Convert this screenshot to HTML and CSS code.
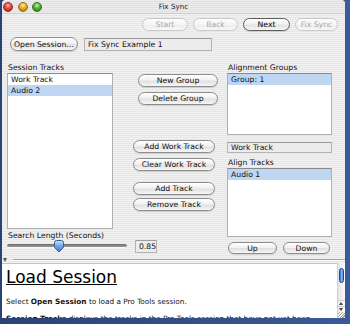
FILE: index.html
```html
<!DOCTYPE html>
<html lang="en">
<head>
    <meta charset="UTF-8">
    <meta name="viewport" content="width=device-width, initial-scale=1.0">
    <title>Fix Sync</title>
    <link rel="stylesheet" href="styles.css">
</head>
<body>
    <div class="window">
        <div class="titlebar">
            <div class="lights">
                <span class="light red"></span>
                <span class="light yellow"></span>
                <span class="light green"></span>
            </div>
            <div class="title">Fix Sync</div>
            <div></div>
        </div>

        <div class="toolbar">
            <button class="btn btn-start" disabled>Start</button>
            <button class="btn btn-back" disabled>Back</button>
            <button class="btn btn-next">Next</button>
            <button class="btn btn-fix" disabled>Fix Sync</button>
        </div>

        <div class="session-row">
            <button class="btn btn-open">Open Session…</button>
            <div class="field session-field">Fix Sync Example 1</div>
        </div>

        <div class="main">
            <div class="col col-left">
                <div class="label">Session Tracks</div>
                <div class="list session-list">
                    <div class="row">Work Track</div>
                    <div class="row selected">Audio 2</div>
                </div>
                <div class="label slider-label">Search Length (Seconds)</div>
                <div class="slider-row">
                    <div class="slider">
                        <div class="groove"></div>
                        <svg class="thumb" width="12" height="13" viewBox="0 0 12 13">
                            <defs>
                                <linearGradient id="thumbFill" x1="0" y1="0" x2="0" y2="1">
                                    <stop offset="0" stop-color="#cfe3fb"/>
                                    <stop offset="0.5" stop-color="#6fa3e6"/>
                                    <stop offset="1" stop-color="#3a76d0"/>
                                </linearGradient>
                            </defs>
                            <path d="M1.5 2.5 Q1.5 0.5 3.5 0.5 H8.5 Q10.5 0.5 10.5 2.5 V7.5 L6 12 L1.5 7.5 Z" fill="url(#thumbFill)" stroke="#3b5f97" stroke-width="1"/>
                        </svg>
                    </div>
                    <div class="field value-field">0.85</div>
                </div>
            </div>

            <div class="col col-middle">
                <button class="btn btn-group btn-new">New Group</button>
                <button class="btn btn-group btn-delete">Delete Group</button>
                <button class="btn btn-track btn-addwork">Add Work Track</button>
                <button class="btn btn-track btn-clear">Clear Work Track</button>
                <button class="btn btn-track btn-add">Add Track</button>
                <button class="btn btn-track btn-remove">Remove Track</button>
            </div>

            <div class="col col-right">
                <div class="label">Alignment Groups</div>
                <div class="list groups-list">
                    <div class="row selected">Group: 1</div>
                </div>
                <div class="field work-field">Work Track</div>
                <div class="label align-label">Align Tracks</div>
                <div class="list align-list">
                    <div class="row selected">Audio 1</div>
                </div>
                <div class="updown">
                    <button class="btn btn-up">Up</button>
                    <button class="btn btn-down">Down</button>
                </div>
            </div>
        </div>

        <div class="splitter">
            <span class="tri"></span>
            <div class="split-line"></div>
        </div>

        <div class="help-area">
            <div class="help">
                <h1>Load Session</h1>
                <p>Select <b>Open Session</b> to load a Pro Tools session.</p>
                <p class="clipped"><b>Session Tracks</b> displays the tracks in the Pro Tools session that have not yet been</p>
            </div>
            <div class="scrollbar">
                <div class="track">
                    <div class="sb-thumb"></div>
                </div>
                <div class="arrow arrow-up"></div>
                <div class="arrow arrow-down"></div>
                <div class="grip"></div>
            </div>
        </div>
    </div>
</body>
</html>
```

FILE: styles.css
```css
body {
    margin: 0;
    width: 350px;
    height: 324px;
    overflow: hidden;
    background: linear-gradient(90deg, #2b4275, #3b5a98);
    font-family: "DejaVu Sans", sans-serif;
}
.window {
    margin-left: 2px;
    width: 343px;
    height: 318px;
    display: flex;
    flex-direction: column;
    background: repeating-linear-gradient(#f1f1f1 0 1px, #e7e7e7 1px 2px);
    border-radius: 4px 4px 0 0;
    overflow: hidden;
}

/* title bar */
.titlebar {
    height: 14px;
    flex: none;
    display: grid;
    grid-template-columns: 1fr auto 1fr;
    align-items: center;
    background: repeating-linear-gradient(#ececec 0 1px, #e1e1e1 1px 2px);
    border-bottom: 1px solid #cdcdcd;
    box-sizing: border-box;
}
.lights {
    display: flex;
    gap: 4.5px;
    padding-left: 1px;
}
.light {
    width: 10px;
    height: 10px;
    border-radius: 50%;
    box-sizing: border-box;
}
.red {
    background: radial-gradient(circle at 50% 30%, #ffb0a8 0, #e2463c 45%, #a51d14 100%);
    border: 1px solid #8e2a22;
}
.yellow {
    background: radial-gradient(circle at 50% 30%, #ffe9a0 0, #e4a923 45%, #a46d0c 100%);
    border: 1px solid #97690e;
}
.green {
    background: radial-gradient(circle at 50% 30%, #c4f0a8 0, #4fb134 45%, #2a7318 100%);
    border: 1px solid #2e6c1f;
}
.title {
    font-size: 7.2px;
    color: #1a1a1a;
}

/* buttons */
.btn {
    height: 13px;
    padding: 0;
    box-sizing: border-box;
    border: 1px solid #8d8d8d;
    border-radius: 7px;
    background: linear-gradient(#fefefe, #f2f2f2 45%, #e1e1e1 55%, #f6f6f6);
    box-shadow: 0 1px 1px rgba(0, 0, 0, 0.12);
    font-family: "DejaVu Sans", sans-serif;
    font-size: 7.7px;
    color: #111;
    display: flex;
    align-items: center;
    justify-content: center;
}
.btn:disabled {
    color: #a9a9a9;
    border-color: #c9c9c9;
    background: linear-gradient(#fdfdfd, #f5f5f5 50%, #ededed 55%, #f8f8f8);
    box-shadow: none;
}
.btn-next {
    border-color: #5e5e5e;
    color: #000;
}

.toolbar {
    display: flex;
    justify-content: flex-end;
    gap: 5px;
    padding: 4px 7px 0 0;
}
.btn-start { width: 46px; }
.btn-back { width: 45px; }
.btn-next { width: 47px; }
.btn-fix { width: 43px; }

.session-row {
    display: flex;
    align-items: center;
    gap: 6px;
    padding-left: 8px;
    margin-top: 6px;
}
.btn-open {
    width: 68px;
    height: 14px;
}

/* fields */
.field {
    box-sizing: border-box;
    background: #ececec;
    border: 1px solid #b4b4b4;
    border-top-color: #9c9c9c;
    font-size: 7.7px;
    color: #111;
    display: flex;
    align-items: center;
    padding-left: 3px;
}
.session-field {
    width: 128px;
    height: 13px;
}

/* main area */
.main {
    display: grid;
    grid-template-columns: 106px 114px 105px;
    padding-left: 5px;
    margin-top: 12px;
}
.col {
    display: flex;
    flex-direction: column;
}
.label {
    font-size: 7.7px;
    line-height: 10px;
    height: 10px;
    color: #111;
    padding-left: 1px;
}
.list {
    box-sizing: border-box;
    background: #fff;
    border: 1px solid #b0b0b0;
    border-top-color: #8a8a8a;
}
.row {
    height: 11px;
    line-height: 11px;
    font-size: 7.7px;
    padding-left: 3px;
    color: #111;
}
.row.selected {
    background: #bfd6f3;
}
.session-list {
    height: 156px;
}
.slider-label {
    margin-top: 2px;
    line-height: 9px;
    height: 9px;
}
.slider-row {
    display: flex;
    align-items: flex-start;
    width: 152px;
}
.slider {
    position: relative;
    width: 120px;
    height: 13px;
}
.groove {
    margin-top: 4px;
    height: 3px;
    border-radius: 2px;
    background: linear-gradient(#6d6d6d, #9a9a9a);
    border-bottom: 1px solid #f8f8f8;
}
.thumb {
    position: absolute;
    left: 46px;
    top: 0;
}
.value-field {
    margin-left: 8px;
    width: 22px;
    height: 13px;
}

.btn-group {
    width: 80px;
    margin-left: 25px;
}
.btn-track {
    width: 82px;
    margin-left: 20px;
}
.btn-new { margin-top: 11px; }
.btn-delete { margin-top: 5px; }
.btn-addwork { margin-top: 35px; }
.btn-clear { margin-top: 5px; }
.btn-add { margin-top: 11px; }
.btn-remove { margin-top: 3px; }

.groups-list {
    height: 62px;
}
.work-field {
    margin-top: 7px;
    height: 11px;
    width: 105px;
}
.align-label {
    margin-top: 5px;
}
.align-list {
    height: 69px;
}
.updown {
    display: flex;
    gap: 6px;
    margin-top: 5px;
    padding-left: 1px;
}
.btn-up {
    width: 49px;
    height: 12px;
}
.btn-down {
    width: 47px;
    height: 12px;
}

/* splitter */
.splitter {
    margin-top: 3px;
    height: 6px;
    flex: none;
    display: flex;
    align-items: center;
}
.tri {
    margin-left: 1px;
    width: 0;
    height: 0;
    border-left: 2.5px solid transparent;
    border-right: 2.5px solid transparent;
    border-top: 4px solid #555;
}
.split-line {
    flex: 1;
    margin-left: 6px;
    height: 1px;
    background: #a5a5a5;
    border-bottom: 1px solid #fafafa;
}

/* help pane */
.help-area {
    flex: 1;
    display: flex;
    min-height: 0;
}
.help {
    flex: 1;
    background: #fff;
    padding: 4px 0 0 4px;
    overflow: hidden;
    border-top: 1px solid #c4c4c4;
}
.help h1 {
    margin: -1px 0 0;
    font-size: 17px;
    line-height: 20px;
    font-weight: normal;
    text-decoration: underline;
    text-decoration-thickness: 1px;
    color: #000;
}
.help p {
    margin: 10px 0 0;
    font-size: 7.3px;
    line-height: 10px;
    color: #111;
}
.help p + p {
    margin-top: 7px;
}
.help .clipped {
    white-space: nowrap;
}
.scrollbar {
    width: 7px;
    display: flex;
    flex-direction: column;
    background: #f2f2f2;
    border-left: 1px solid #d0d0d0;
}
.track {
    flex: 1;
    padding-top: 5px;
    background: linear-gradient(90deg, #e4e4e4, #fbfbfb);
}
.sb-thumb {
    margin-left: 1px;
    width: 5px;
    height: 15px;
    border-radius: 3px;
    background: linear-gradient(90deg, #2f63c2, #8dbaf5 55%, #4b86de);
    border: 0.5px solid #24478a;
    box-sizing: border-box;
}
.arrow {
    height: 6px;
    position: relative;
    background: linear-gradient(90deg, #eaeaea, #fdfdfd);
    border-top: 1px solid #cfcfcf;
    box-sizing: border-box;
}
.arrow::after {
    content: "";
    position: absolute;
    left: 1px;
    top: 1px;
    border-left: 2px solid transparent;
    border-right: 2px solid transparent;
}
.arrow-up::after {
    border-bottom: 3px solid #444;
}
.arrow-down::after {
    border-top: 3px solid #444;
}
.grip {
    height: 6px;
    background: repeating-linear-gradient(135deg, #f4f4f4 0 1px, #9a9a9a 1px 2px);
}
```
